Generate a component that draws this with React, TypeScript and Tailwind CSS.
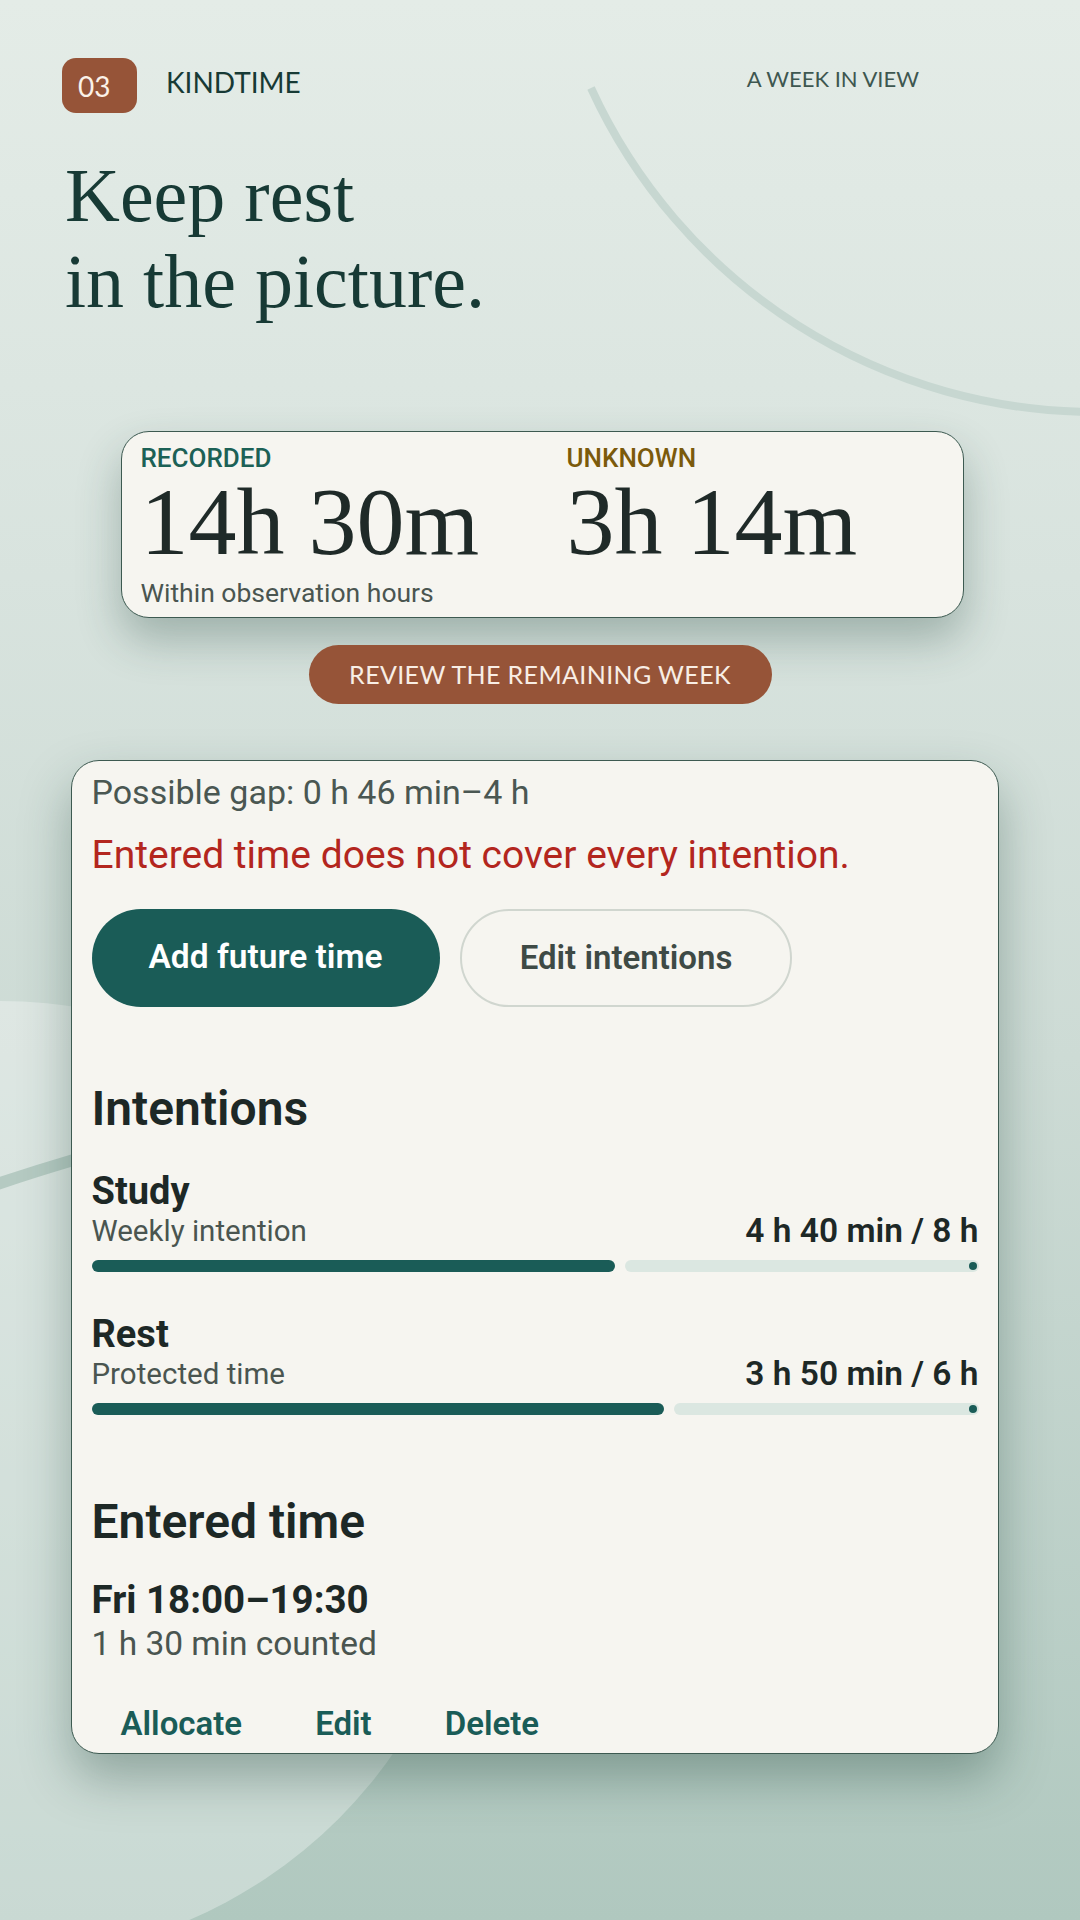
import React from "react";

const intentions = [
  { title: "Study", sub: "Weekly intention", spent: 280, goal: 480, label: "4 h 40 min / 8 h" },
  { title: "Rest", sub: "Protected time", spent: 230, goal: 360, label: "3 h 50 min / 6 h" },
];

function Bar({ ratio }: { ratio: number }) {
  return (
    <div className="mt-[11px] flex h-[12px] gap-[10px]">
      <div className="h-full shrink-0 rounded-full bg-[#1a5c57]" style={{ width: Math.round(896 * ratio) }} />
      <div className="relative h-full flex-1 rounded-full bg-[#dbe7e1]">
        <span className="absolute right-[2px] top-[2px] h-[8px] w-[8px] rounded-full bg-[#1a5c57]" />
      </div>
    </div>
  );
}

export default function App() {
  return (
    <div className="relative h-[1920px] w-[1080px] overflow-hidden bg-[linear-gradient(180deg,#e4ece7_0%,#d8e3de_30%,#cddbd5_55%,#b0c8bf_100%)] font-['Roboto',sans-serif]">
      <svg className="absolute inset-0" width="1080" height="1920" viewBox="0 0 1080 1920">
        <circle cx="0" cy="1480" r="479" fill="#ffffff" fillOpacity="0.32" />
        <path d="M 591 88 A 555 555 0 0 0 1100 412" fill="none" stroke="#c7d7d1" strokeWidth="8" />
        <path d="M -20 1190 Q 60 1162 160 1136" fill="none" stroke="#b5cac2" strokeWidth="12" />
      </svg>

      <div className="relative flex flex-col">
        <div className="flex items-start pl-[62px] pr-[161px] pt-[58px]">
          <div className="flex items-center gap-[29px]">
            <div className="flex h-[55px] w-[75px] items-center rounded-[14px] bg-[#965438] pl-[16px] font-['Lato',sans-serif] text-[28px] leading-none text-[#fbf1e8]">
              03
            </div>
            <span className="mb-[7px] font-['Lato',sans-serif] text-[28px] leading-[34px] text-[#173a35]">KINDTIME</span>
          </div>
          <span className="ml-auto mt-[8px] font-['Lato',sans-serif] text-[22px] leading-[26px] text-[#3e5750]">
            A WEEK IN VIEW
          </span>
        </div>

        <h1 className="ml-[65px] mt-[39px] font-['Liberation_Serif',serif] text-[76px] font-normal leading-[86px] text-[#173a35]">
          Keep rest
          <br />
          in the picture.
        </h1>

        <div className="ml-[121px] mt-[107px] h-[187px] w-[843px] rounded-[28px] border-[1.5px] border-[#3d5a51] bg-[#f6f5f0] pl-[18.5px] pt-[10.5px] shadow-[0_22px_44px_rgba(40,75,65,0.32)]">
          <div className="flex">
            <div className="flex w-[426px] flex-col">
              <span className="text-[26px] font-medium leading-[30px] text-[#1c6156]">RECORDED</span>
              <span className="mt-[1px] font-['Liberation_Serif',serif] text-[96px] leading-[96px] text-[#1f2a28]">14h 30m</span>
            </div>
            <div className="flex flex-col">
              <span className="text-[26px] font-medium leading-[30px] text-[#7b5a0b]">UNKNOWN</span>
              <span className="mt-[1px] font-['Liberation_Serif',serif] text-[96px] leading-[96px] text-[#1f2a28]">3h 14m</span>
            </div>
          </div>
          <p className="mt-[7px] text-[26.5px] leading-[32px] text-[#4a5550]">Within observation hours</p>
        </div>

        <div className="mt-[27px] flex h-[59px] w-[463px] items-center justify-center self-center rounded-full bg-[#965438] font-['Lato',sans-serif] text-[25px] tracking-[0.015em] text-[#f8eee5]">
          REVIEW THE REMAINING WEEK
        </div>

        <div className="ml-[71px] mt-[56px] h-[994px] w-[928px] rounded-[28px] border-[1.5px] border-[#3d5a51] bg-[#f6f5f0] px-[19.5px] pt-[10.5px] shadow-[0_24px_50px_rgba(30,65,55,0.35)]">
          <p className="text-[34px] leading-[40px] text-[#4a5752]">Possible gap: 0 h 46 min–4 h</p>
          <p className="mt-[20px] text-[39px] leading-[46px] text-[#b3261e]">Entered time does not cover every intention.</p>

          <div className="mt-[31px] flex gap-[20px]">
            <button className="h-[98px] rounded-full bg-[#1a5c57] px-[57px] text-[33.5px] font-semibold text-white">
              Add future time
            </button>
            <button className="h-[98px] rounded-full border-2 border-[#d0d6cf] px-[58px] text-[33px] font-semibold text-[#3e4a45]">
              Edit intentions
            </button>
          </div>

          <h2 className="mt-[74px] text-[48px] font-semibold leading-[56px] text-[#1d2826]">Intentions</h2>

          {intentions.map((it, i) => (
            <div key={it.title} className={i === 0 ? "mt-[32px]" : "mt-[40px]"}>
              <div className="text-[38px] font-bold leading-[44px] text-[#1d2826]">{it.title}</div>
              <div className="flex items-end justify-between">
                <span className="text-[29.5px] leading-[36px] text-[#4a5550]">{it.sub}</span>
                <span className="text-[33.5px] font-semibold leading-[36px] text-[#1d2826]">{it.label}</span>
              </div>
              <Bar ratio={it.spent / it.goal} />
            </div>
          ))}

          <h2 className="mt-[79px] text-[48px] font-semibold leading-[56px] text-[#1d2826]">Entered time</h2>
          <div className="mt-[28px] text-[38.5px] font-bold leading-[44px] text-[#1d2826]">Fri 18:00–19:30</div>
          <div className="mt-[3px] text-[33.5px] leading-[38px] text-[#4a5550]">1 h 30 min counted</div>

          <div className="mt-[33px] flex gap-[15px]">
            {["Allocate", "Edit", "Delete"].map((t) => (
              <button key={t} className="h-[56px] px-[29px] text-[33px] font-semibold leading-[40px] text-[#1a5c57]">
                {t}
              </button>
            ))}
          </div>
        </div>
      </div>
    </div>
  );
}
